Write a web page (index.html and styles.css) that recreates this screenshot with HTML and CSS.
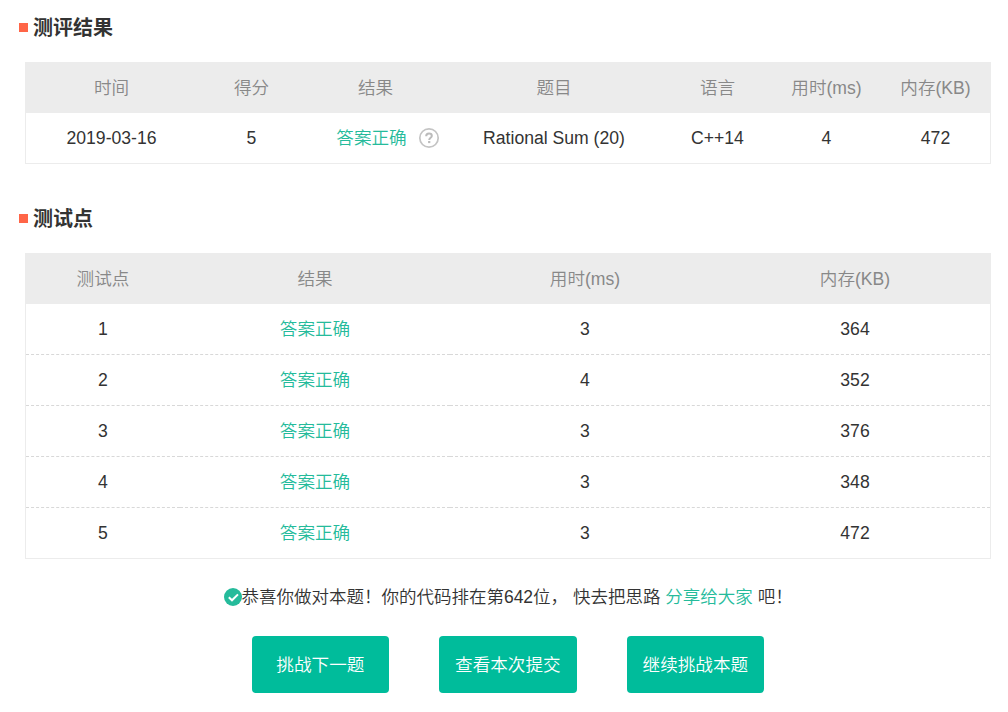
FILE: index.html
```html
<!DOCTYPE html>
<html lang="zh-CN">
<head>
    <meta charset="UTF-8">
    <title>测评结果</title>
    <link rel="stylesheet" href="styles.css">
</head>
<body>
<div class="section">
    <h2 class="title">测评结果</h2>
    <table class="result">
        <colgroup>
            <col class="c-time"><col class="c-small"><col class="c-result"><col class="c-name"><col class="c-small"><col class="c-small"><col class="c-small">
        </colgroup>
        <thead>
        <tr>
            <th>时间</th>
            <th>得分</th>
            <th>结果</th>
            <th>题目</th>
            <th>语言</th>
            <th>用时(ms)</th>
            <th>内存(KB)</th>
        </tr>
        </thead>
        <tbody>
        <tr>
            <td>2019-03-16</td>
            <td>5</td>
            <td>
                <div class="status">
                    <span class="green">答案正确</span>
                    <svg class="help" width="22" height="22" viewBox="0 0 22 22">
                        <circle cx="11" cy="11" r="9.2" fill="none" stroke="#c4c4c4" stroke-width="1.7"/>
                        <path d="M8.2 9.2C8.2 7.4 9.3 6.6 11 6.6S13.8 7.5 13.8 8.9C13.8 10.7 11.2 10.8 11.2 12.9" fill="none" stroke="#bbb" stroke-width="2"/>
                        <rect x="10.1" y="14" width="2.2" height="2.1" fill="#bbb"/>
                    </svg>
                </div>
            </td>
            <td>Rational Sum (20)</td>
            <td>C++14</td>
            <td>4</td>
            <td>472</td>
        </tr>
        </tbody>
    </table>
</div>
<div class="section">
    <h2 class="title">测试点</h2>
    <table class="points">
        <colgroup>
            <col class="c-point"><col><col><col>
        </colgroup>
        <thead>
        <tr>
            <th>测试点</th>
            <th>结果</th>
            <th>用时(ms)</th>
            <th>内存(KB)</th>
        </tr>
        </thead>
        <tbody>
        <tr><td>1</td><td class="green">答案正确</td><td>3</td><td>364</td></tr>
        <tr><td>2</td><td class="green">答案正确</td><td>4</td><td>352</td></tr>
        <tr><td>3</td><td class="green">答案正确</td><td>3</td><td>376</td></tr>
        <tr><td>4</td><td class="green">答案正确</td><td>3</td><td>348</td></tr>
        <tr><td>5</td><td class="green">答案正确</td><td>3</td><td>472</td></tr>
        </tbody>
    </table>
</div>
<div class="message">
    <svg class="ok" width="18" height="18" viewBox="0 0 18 18">
        <circle cx="9" cy="9" r="9" fill="#25bb9b"/>
        <path d="M4.8 9.2L8 12.3L14 6.4" fill="none" stroke="#fff" stroke-width="2"/>
    </svg>
    <p>恭喜你做对本题！你的代码排在第642位， 快去把思路 <a class="green" href="#">分享给大家</a> 吧！</p>
</div>
<div class="btns">
    <a class="btn" href="#">挑战下一题</a>
    <a class="btn" href="#">查看本次提交</a>
    <a class="btn" href="#">继续挑战本题</a>
</div>
</body>
</html>
```
FILE: styles.css
```css
* {
    margin: 0;
    padding: 0;
    box-sizing: border-box;
}

body {
    padding: 13px 17px 0 19px;
    background-color: #fff;
    color: #333;
    font: 350 17.6px/30px "Liberation Sans", "Noto Sans CJK SC DemiLight", "Noto Sans CJK SC", sans-serif;
    overflow: hidden;
}

a {
    text-decoration: none;
}

.section {
    height: 191px;
}

.section + .section {
    height: 355px;
}

.title {
    display: flex;
    align-items: center;
    height: 30px;
    margin-bottom: 19px;
    font-family: "Liberation Sans", "Noto Sans CJK SC", sans-serif;
    font-size: 20px;
    font-weight: bold;
}

.title::before {
    content: "";
    width: 9px;
    height: 9px;
    margin: -2px 5px 0 0;
    background-color: #ff6547;
}

table {
    width: 966px;
    margin-left: 6px;
    table-layout: fixed;
    border: 1px solid #ececec;
    border-collapse: separate;
    border-spacing: 0;
    text-align: center;
}

th {
    height: 50px;
    background-color: #ececec;
    color: #888;
    font-weight: 350;
}

td {
    height: 50px;
}

.c-time {
    width: 171px;
}

.c-small {
    width: 109px;
}

.c-result {
    width: 139px;
}

.c-name {
    width: 218px;
}

.c-point {
    width: 154px;
}

.points td {
    height: 51px;
    border-bottom: 1px dashed #d8d8d8;
}

.points tr:last-child td {
    height: 50px;
    border-bottom: 0;
}

.green {
    color: #25bb9b;
}

.status {
    display: flex;
    align-items: center;
    justify-content: center;
    gap: 11px;
    margin-right: -25px;
}

.message {
    display: flex;
    align-items: center;
    height: 30px;
    margin: 23px 0 0 205px;
    font-size: 17.5px;
    white-space: nowrap;
}

.message p {
    margin-left: -0.6px;
}

.btns {
    display: flex;
    gap: 50px;
    margin: 24px 0 0 232.6px;
}

.btn {
    width: 137.5px;
    height: 57px;
    border-radius: 4px;
    background-color: #00bc9b;
    color: #fff;
    line-height: 58px;
    text-align: center;
}
```
